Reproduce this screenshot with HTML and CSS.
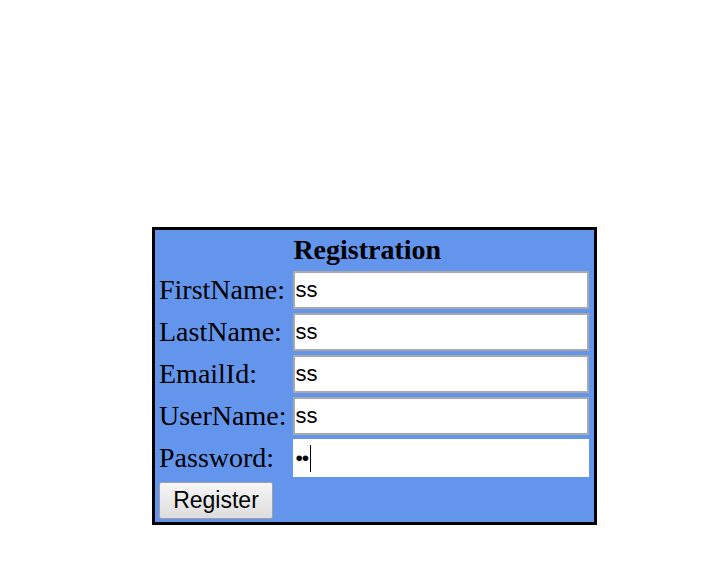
FILE: index.html
```html
<!DOCTYPE html>
<html>
<head>
<meta charset="utf-8">
<link rel="stylesheet" href="styles.css">
</head>
<body>
<form class="reg-form">
<table class="reg-table">
  <tr><th colspan="2" class="title">Registration</th></tr>
  <tr><td class="label">FirstName:</td><td class="cell"><input class="field" type="text" value="ss"></td></tr>
  <tr><td class="label">LastName:</td><td class="cell"><input class="field" type="text" value="ss"></td></tr>
  <tr><td class="label">EmailId:</td><td class="cell"><input class="field" type="text" value="ss"></td></tr>
  <tr><td class="label">UserName:</td><td class="cell"><input class="field" type="text" value="ss"></td></tr>
  <tr><td class="label">Password:</td><td class="cell"><div class="field field-focus"><span class="dots">••</span><span class="caret"></span></div></td></tr>
  <tr><td colspan="2" class="btn-cell"><button type="button" class="btn">Register</button></td></tr>
</table>
</form>
</body>
</html>
```
FILE: styles.css
```css
html, body { margin: 0; padding: 0; background: #fff; }
.reg-form { padding: 227px 0 0 152px; }
.reg-table {
  border: 3px solid #000;
  background: #6495ED;
  border-spacing: 2px;
  font-family: "Liberation Serif", serif;
  font-size: 28px;
  color: #000;
}
.title { font-weight: bold; text-align: center; line-height: 34px; padding: 1px 16px 1px 2px; }
.label { line-height: 38px; padding: 1px 3px 1px 2px; white-space: nowrap; }
.cell { padding: 1px 3px 1px 1px; }
.btn-cell { padding: 2px 2px 1px 2px; }
.field {
  box-sizing: border-box;
  width: 296px;
  height: 38px;
  margin: 0;
  border: 2px solid #a9a9a9;
  background: #fff;
  font-family: "Liberation Sans", sans-serif;
  font-size: 22px;
  padding: 0 1px;
  color: #000;
  display: block;
}
.field-focus {
  border-color: #fff;
  display: flex;
  align-items: center;
}
.dots { font-size: 21px; letter-spacing: -1px; }
.caret { display: inline-block; width: 1px; height: 27px; background: #000; margin-left: 2px; }
.btn {
  display: block;
  font-family: "Liberation Sans", sans-serif;
  font-size: 23px;
  width: 114px;
  height: 37px;
  border: 1px solid #a0a0a0;
  border-radius: 2px;
  background: linear-gradient(#f6f6f6, #dddddd);
  color: #000;
  padding: 0;
  margin: 0;
}
```
